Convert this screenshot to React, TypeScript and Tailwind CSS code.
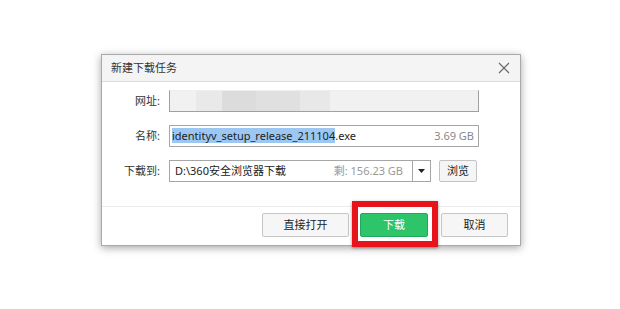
import React from "react";

const font = { fontFamily: '"Noto Sans", "Noto Sans CJK SC", sans-serif' };

export default function App() {
  return (
    <div className="w-[620px] h-[309px] bg-white overflow-hidden" style={font}>
      <div className="pt-[54px] pl-[101px]">
        <div className="w-[420px] h-[192px] border border-[#a9a9a9] bg-white shadow-[0_2px_8px_rgba(0,0,0,0.35)] flex flex-col text-[11px] text-[#333]">
          {/* title bar */}
          <div className="h-[27px] shrink-0 bg-[#f4f4f4] border-b border-[#dcdcdc] flex items-center justify-between pl-[9px] pr-[10px]">
            <span className="text-[11px] text-[#333]">新建下载任务</span>
            <svg width="12" height="12" viewBox="0 0 12 12">
              <path d="M1 1 L11 11 M11 1 L1 11" stroke="#666" strokeWidth="1.1" fill="none" />
            </svg>
          </div>
          {/* body */}
          <div className="flex flex-col gap-[13px] pt-[8px] pb-[24px] border-b border-[#ececec]">
            <div className="flex items-center h-[22px]">
              <span className="w-[58px] text-right">网址:</span>
              <div className="ml-[9px] w-[310px] h-[22px] border border-[#a0a0a0] border-t-[#eeeeee] flex overflow-hidden">
                <div className="w-[26px] bg-[#f1f1f1]" />
                <div className="w-[26px] bg-[#e9e9e9]" />
                <div className="w-[34px] bg-[#dcdcdc]" />
                <div className="w-[44px] bg-[#e0e0e0]" />
                <div className="w-[30px] bg-[#e8e8e8]" />
                <div className="flex-1 bg-[#f1f1f1]" />
              </div>
            </div>
            <div className="flex items-center h-[22px]">
              <span className="w-[58px] text-right">名称:</span>
              <div className="ml-[9px] w-[310px] h-[22px] border border-[#a6a6a6] flex items-center justify-between pl-[2px] pr-[4px]">
                <span className="text-[#222]">
                  <span className="bg-[#9cc7f2]">identityv_setup_release_211104</span>.exe
                </span>
                <span className="text-[#888]">3.69 GB</span>
              </div>
            </div>
            <div className="flex items-center h-[22px]">
              <span className="w-[58px] text-right">下载到:</span>
              <div className="ml-[9px] w-[262px] h-[22px] border border-[#a6a6a6] flex items-center">
                <div className="flex-1 flex items-center justify-between pl-[5px] pr-[9px]">
                  <span className="text-[#222]">D:\360安全浏览器下载</span>
                  <span className="text-[#999]">剩: 156.23 GB</span>
                </div>
                <div className="w-[18px] h-full border-l border-[#a6a6a6] flex items-center justify-center">
                  <svg width="7" height="4" viewBox="0 0 7 4">
                    <path d="M0 0 L7 0 L3.5 4 Z" fill="#222" />
                  </svg>
                </div>
              </div>
              <button className="ml-[8px] w-[38px] h-[22px] border border-[#c3c3c3] rounded-[2px] bg-[#f5f5f5] text-[#222] flex items-center justify-center">
                浏览
              </button>
            </div>
          </div>
          {/* footer */}
          <div className="flex-1 flex justify-end items-start pt-[6px] pr-[12px]">
            <button className="w-[87px] h-[24px] border border-[#c6c6c6] rounded-[2px] bg-[#f6f6f6] text-[#222] flex items-center justify-center">
              直接打开
            </button>
            <div className="relative ml-[11px]">
              <button className="w-[68px] h-[24px] border border-[#22a85a] rounded-[2px] bg-[#2ec56a] text-white flex items-center justify-center">
                下载
              </button>
              <div className="absolute left-[-8px] top-[-12px] w-[86px] h-[46px] border-[6px] border-[#e8141b] shadow-[0_1px_3px_rgba(0,0,0,0.4)]" />
            </div>
            <button className="ml-[13px] w-[67px] h-[24px] border border-[#c6c6c6] rounded-[2px] bg-[#f6f6f6] text-[#222] flex items-center justify-center">
              取消
            </button>
          </div>
        </div>
      </div>
    </div>
  );
}
